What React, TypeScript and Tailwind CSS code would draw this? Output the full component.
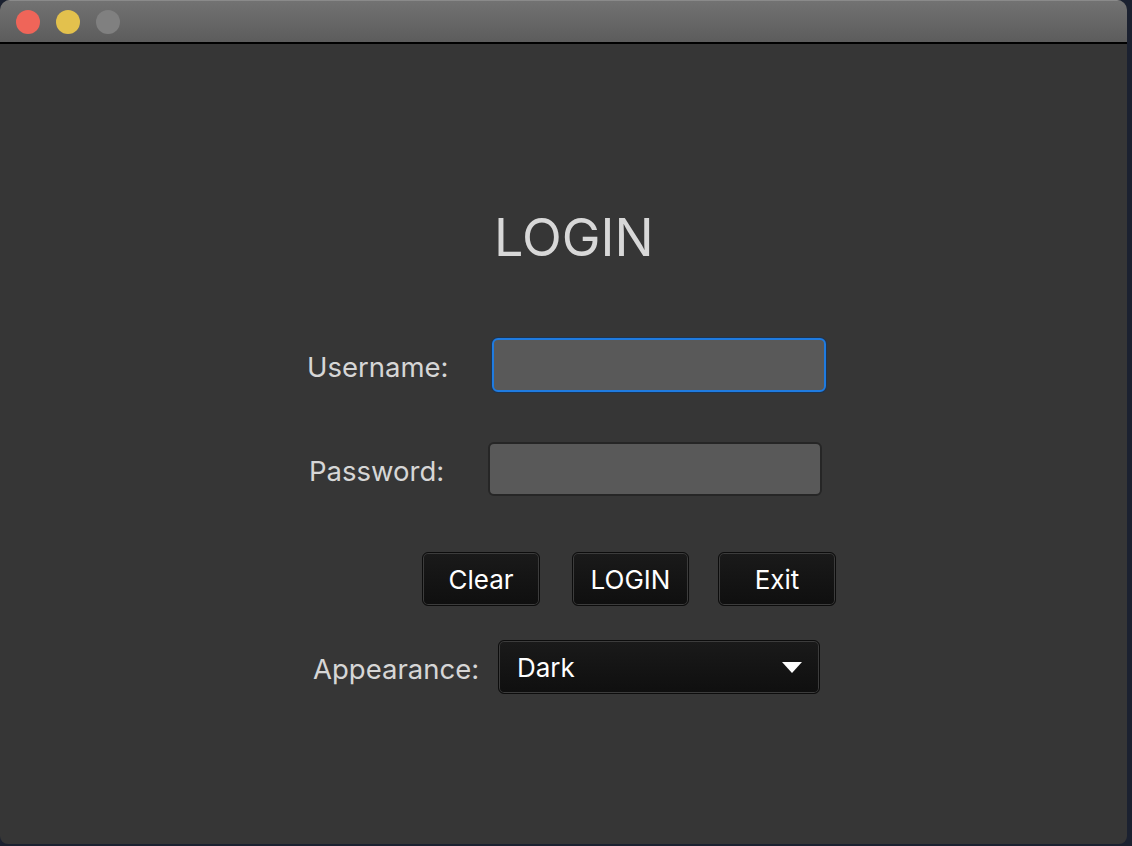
import React, { useState } from "react";

const font = { fontFamily: "Inter, 'Noto Sans', sans-serif" };

function DarkButton({ label, className = "" }: { label: string; className?: string }) {
  return (
    <button
      className={`h-[54px] rounded-[6px] border border-[#0c0c0c] bg-gradient-to-b from-[#1a1a1a] to-[#0f0f0f] shadow-[inset_0_0_0_1px_#3c3c3c] text-white text-[26px] flex items-center justify-center ${className}`}
    >
      {label}
    </button>
  );
}

export default function App() {
  const [user, setUser] = useState("");
  const [pass, setPass] = useState("");

  return (
    <div className="w-[1132px] h-[846px] bg-[#1b2130] overflow-hidden" style={font}>
      <div className="w-[1127px] h-[844px] rounded-t-[10px] rounded-b-[8px] overflow-hidden bg-[#363636] flex flex-col">
        {/* title bar */}
        <div className="h-[42px] bg-gradient-to-b from-[#727272] to-[#5c5c5c] border-t border-[#8a8a8a] flex items-center gap-[16px] pl-[16px]">
          <span className="w-[24px] h-[24px] rounded-full bg-[#ef6559]" />
          <span className="w-[24px] h-[24px] rounded-full bg-[#e3c14d]" />
          <span className="w-[24px] h-[24px] rounded-full bg-[#808080]" />
        </div>
        <div className="h-[2px] bg-black" />

        {/* body */}
        <div className="flex flex-col">
          <h1 className="mt-[164px] ml-[494px] text-[52px] leading-[60px] text-[#d8d8d8] font-normal">LOGIN</h1>

          <div className="mt-[70px] ml-[307px] flex items-center">
            <label className="w-[185px] pt-[5px] text-[27.5px] text-[#d6d6d6]">Username:</label>
            <input
              value={user}
              onChange={(e) => setUser(e.target.value)}
              className="w-[334px] h-[54px] rounded-[6px] bg-[#595959] border-2 border-[#1f7be0] shadow-[0_0_0_1px_#1d3552] outline-none px-3 text-white text-[24px]"
            />
          </div>

          <div className="mt-[50px] ml-[309px] flex items-center">
            <label className="w-[179px] pt-[5px] text-[27.5px] text-[#d6d6d6]">Password:</label>
            <input
              type="password"
              value={pass}
              onChange={(e) => setPass(e.target.value)}
              className="w-[334px] h-[54px] rounded-[6px] bg-[#595959] border-2 border-[#262626] outline-none px-3 text-white text-[24px]"
            />
          </div>

          <div className="mt-[56px] ml-[422px] flex">
            <DarkButton label="Clear" className="w-[118px]" />
            <DarkButton label="LOGIN" className="w-[117px] ml-[32px]" />
            <DarkButton label="Exit" className="w-[118px] ml-[29px]" />
          </div>

          <div className="mt-[34px] ml-[313px] flex items-center">
            <label className="w-[185px] pt-[5px] text-[27.5px] text-[#d6d6d6]">Appearance:</label>
            <div className="w-[322px] h-[54px] rounded-[6px] border border-[#0c0c0c] bg-gradient-to-b from-[#1a1a1a] to-[#0f0f0f] shadow-[inset_0_0_0_1px_#3c3c3c] flex items-center justify-between pl-[18px] pr-[17px]">
              <span className="text-white text-[26px]">Dark</span>
              <svg width="20" height="11" viewBox="0 0 20 11">
                <polygon points="0,0 20,0 10,11" fill="#ffffff" />
              </svg>
            </div>
          </div>
        </div>
      </div>
    </div>
  );
}
